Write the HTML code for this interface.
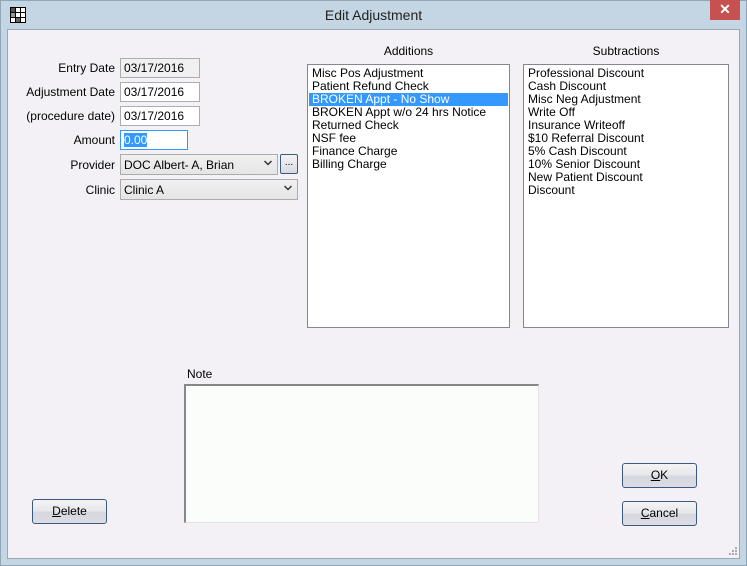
<!DOCTYPE html>
<html><head><style>
*{margin:0;padding:0;box-sizing:border-box}
body{width:747px;height:566px;background:#c4d6e4;font-family:"Liberation Sans",sans-serif;font-size:12px;color:#000;position:relative;overflow:hidden}
.a{position:absolute}
#client{left:7px;top:29px;width:733px;height:530px;background:#f3f1f5;border:1px solid #9aa6b2}
.lbl{text-align:right;width:110px;left:5px}
.tb{border:1px solid #abadb3;background:#fff;padding:2px 0 0 3px;height:20px;line-height:14px}
.list{border:1px solid #828790;background:#fff;padding:2px 1px;line-height:13px}
.list div{padding-left:3px;height:13px;white-space:nowrap}
.sel{background:#3399ff;color:#fff}
.cb{border:1px solid #acacac;background:linear-gradient(#f0f0f0,#e5e5e5);padding:3px 0 0 3px;height:21px}
.arr{position:absolute;right:5px;top:5px;width:8px;height:6px}
.btn{border:1px solid #3c5a80;border-radius:3px;background:linear-gradient(#f4f4f6 0%,#e8e8ec 45%,#d6d7de 55%,#dcdde4 100%);text-align:center;line-height:22px;height:25px;width:75px}
</style></head><body>
<div class="a" style="left:0;top:0;width:747px;height:566px;border:1px solid #8fa5b8"></div>
<svg class="a" style="left:10px;top:7px" width="16" height="16" viewBox="0 0 16 16">
<rect width="16" height="16" fill="#000"/>
<rect x="1" y="1" width="4" height="4" fill="#555"/><rect x="6" y="1" width="4" height="4" fill="#fff"/><rect x="11" y="1" width="4" height="4" fill="#fff"/>
<rect x="1" y="6" width="4" height="4" fill="#999"/><rect x="6" y="6" width="4" height="4" fill="#fff"/><rect x="11" y="6" width="4" height="4" fill="#fff"/>
<rect x="1" y="11" width="4" height="4" fill="#fff"/><rect x="6" y="11" width="4" height="4" fill="#666"/><rect x="11" y="11" width="4" height="4" fill="#fff"/>
</svg>
<div class="a" style="left:0;top:7px;width:747px;text-align:center;font-size:14px;color:#222">Edit Adjustment</div>
<div class="a" style="left:710px;top:0;width:30px;height:20px;background:#c75050;color:#fff;text-align:center;font-size:14px;line-height:19px;font-weight:bold">✕</div>
<div class="a" id="client"></div>

<div class="a lbl" style="top:61px">Entry Date</div>
<div class="a tb" style="left:120px;top:58px;width:80px;background:#f0f0f0">03/17/2016</div>
<div class="a lbl" style="top:85px">Adjustment Date</div>
<div class="a tb" style="left:120px;top:82px;width:80px">03/17/2016</div>
<div class="a lbl" style="top:109px">(procedure date)</div>
<div class="a tb" style="left:120px;top:106px;width:80px">03/17/2016</div>
<div class="a lbl" style="top:133px">Amount</div>
<div class="a tb" style="left:120px;top:130px;width:68px;border-color:#3399ff"><span style="background:#3399ff;color:#fff">0.00</span></div>
<div class="a lbl" style="top:158px">Provider</div>
<div class="a cb" style="left:120px;top:154px;width:158px">DOC Albert- A, Brian<svg class="arr" viewBox="0 0 8 6"><path d="M0.5 1 L4 4.5 L7.5 1" stroke="#333" stroke-width="1.5" fill="none"/></svg></div>
<div class="a" style="left:280px;top:154px;width:18px;height:20px;border:1px solid #3c5a80;border-radius:2px;background:linear-gradient(#f4f4f6,#d8d9e0);text-align:center;line-height:16px;font-size:10px">...</div>
<div class="a lbl" style="top:183px">Clinic</div>
<div class="a cb" style="left:120px;top:179px;width:178px">Clinic A<svg class="arr" viewBox="0 0 8 6"><path d="M0.5 1 L4 4.5 L7.5 1" stroke="#333" stroke-width="1.5" fill="none"/></svg></div>

<div class="a" style="left:307px;top:44px;width:203px;text-align:center">Additions</div>
<div class="a list" style="left:307px;top:64px;width:203px;height:264px">
<div>Misc Pos Adjustment</div><div>Patient Refund Check</div><div class="sel">BROKEN Appt - No Show</div><div>BROKEN Appt w/o 24 hrs Notice</div><div>Returned Check</div><div>NSF fee</div><div>Finance Charge</div><div>Billing Charge</div>
</div>
<div class="a" style="left:523px;top:44px;width:206px;text-align:center">Subtractions</div>
<div class="a list" style="left:523px;top:64px;width:206px;height:264px">
<div>Professional Discount</div><div>Cash Discount</div><div>Misc Neg Adjustment</div><div>Write Off</div><div>Insurance Writeoff</div><div>$10 Referral Discount</div><div>5% Cash Discount</div><div>10% Senior Discount</div><div>New Patient Discount</div><div>Discount</div>
</div>

<div class="a" style="left:187px;top:367px">Note</div>
<div class="a" style="left:184px;top:384px;width:355px;height:139px;background:#fbfdfb;border:1px solid #e3e3e3;border-top:2px solid #888;border-left:2px solid #888"></div>

<div class="a btn" style="left:32px;top:499px"><u>D</u>elete</div>
<div class="a btn" style="left:622px;top:463px"><u>O</u>K</div>
<div class="a btn" style="left:622px;top:501px"><u>C</u>ancel</div>
<svg class="a" style="left:728px;top:546px" width="10" height="10"><g fill="#aab"><rect x="7" y="1" width="2" height="2"/><rect x="4" y="4" width="2" height="2"/><rect x="7" y="4" width="2" height="2"/><rect x="1" y="7" width="2" height="2"/><rect x="4" y="7" width="2" height="2"/><rect x="7" y="7" width="2" height="2"/></g></svg>
</body></html>
